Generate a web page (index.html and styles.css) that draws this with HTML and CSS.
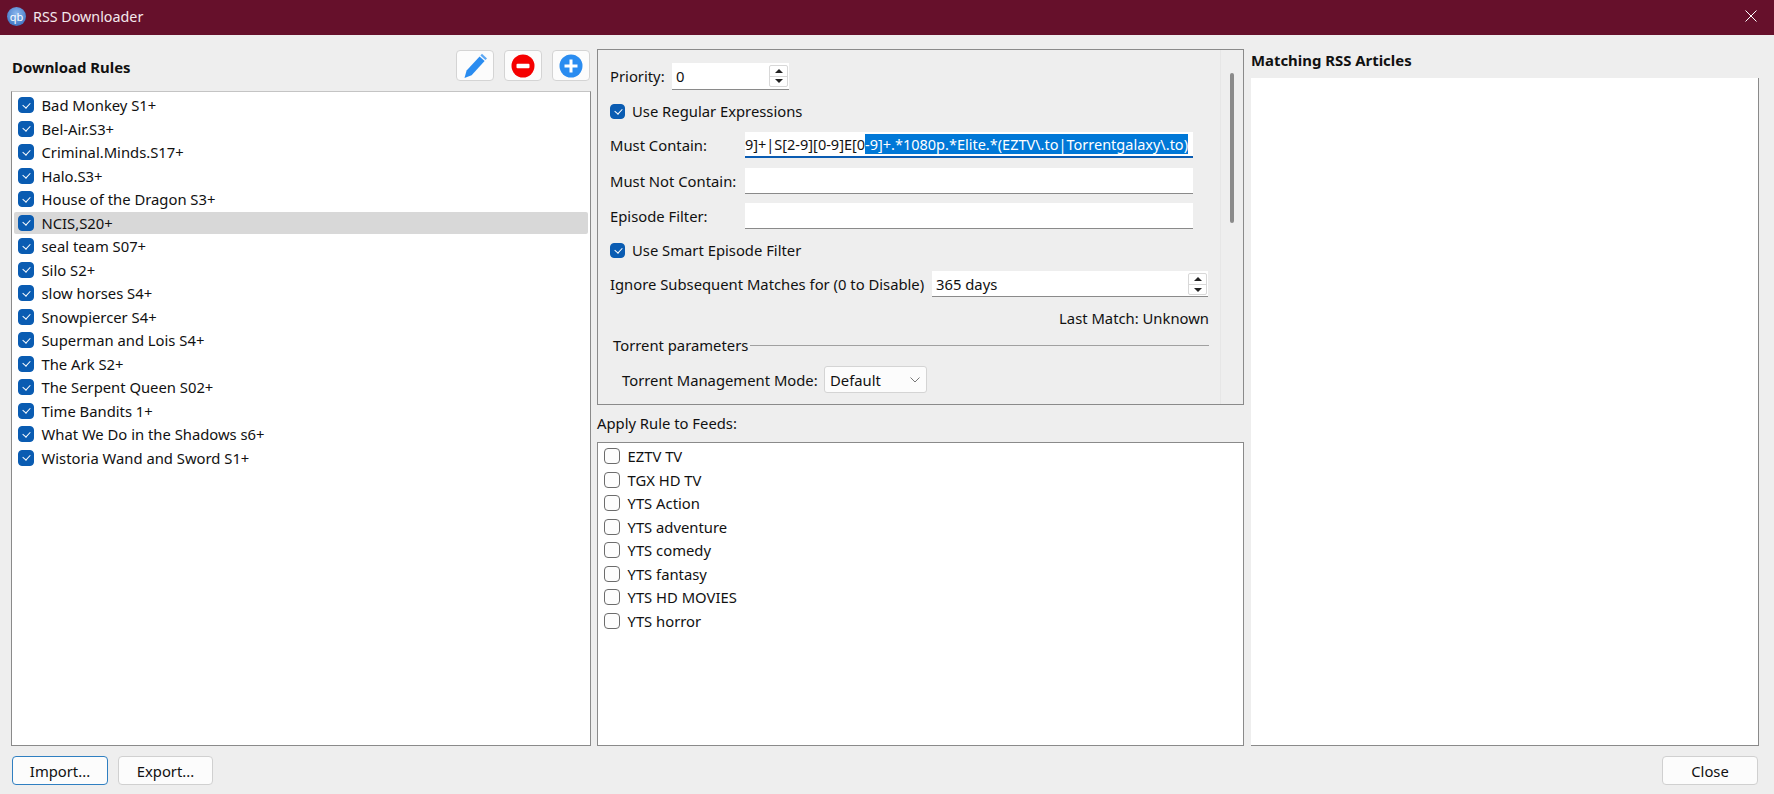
FILE: index.html
```html
<!DOCTYPE html>
<html lang="en">

<head>
 <meta charset="UTF-8">
 <meta name="viewport" content="width=device-width, initial-scale=1.0">
 <title>RSS Downloader</title>
 <link rel="stylesheet" href="styles.css">
</head>

<body>
 <header class="titlebar">
  <span class="app-icon">qb</span>
  <span class="app-title">RSS Downloader</span>
  <svg class="close-x" width="12" height="12" viewBox="0 0 12 12"><path d="M0.5 0.5 L11.5 11.5 M11.5 0.5 L0.5 11.5" stroke="#fff" stroke-width="1" fill="none"/></svg>
 </header>

 <main class="panes">
  <section class="rules">
   <div class="rules-head">
    <h2>Download Rules</h2>
    <div class="tools">
     <button class="tool">
      <svg width="24" height="26" viewBox="0 0 24 26"><path d="M1.5 25 L3.6 17.6 L16.6 3.4 L21.6 8 L8.6 22.2 Z" fill="#2a8cf0"/><path d="M17.4 2.5 L19 0.8 L24 5.4 L22.4 7.1 Z" fill="#2a8cf0" opacity=".75"/></svg>
     </button>
     <button class="tool">
      <svg width="24" height="24" viewBox="0 0 24 24"><circle cx="12" cy="12" r="11.5" fill="#f50000"/><rect x="5.5" y="9.8" width="13" height="4.4" rx="1" fill="#fff"/></svg>
     </button>
     <button class="tool">
      <svg width="24" height="24" viewBox="0 0 24 24"><circle cx="12" cy="12" r="11.5" fill="#2a8cf0"/><path d="M12 5.5 V18.5 M5.5 12 H18.5" stroke="#fff" stroke-width="3" fill="none"/></svg>
     </button>
    </div>
   </div>
   <ul class="list rule-list">
    <li><span class="check on"></span>Bad Monkey S1+</li>
    <li><span class="check on"></span>Bel-Air.S3+</li>
    <li><span class="check on"></span>Criminal.Minds.S17+</li>
    <li><span class="check on"></span>Halo.S3+</li>
    <li><span class="check on"></span>House of the Dragon S3+</li>
    <li class="selected"><span class="check on"></span>NCIS,S20+</li>
    <li><span class="check on"></span>seal team S07+</li>
    <li><span class="check on"></span>Silo S2+</li>
    <li><span class="check on"></span>slow horses S4+</li>
    <li><span class="check on"></span>Snowpiercer S4+</li>
    <li><span class="check on"></span>Superman and Lois S4+</li>
    <li><span class="check on"></span>The Ark S2+</li>
    <li><span class="check on"></span>The Serpent Queen S02+</li>
    <li><span class="check on"></span>Time Bandits 1+</li>
    <li><span class="check on"></span>What We Do in the Shadows s6+</li>
    <li><span class="check on"></span>Wistoria Wand and Sword S1+</li>
   </ul>
  </section>

  <section class="editor">
   <div class="settings">
    <div class="form">
     <div class="row">
      <label class="priority-label">Priority:</label>
      <div class="field spin priority">0<span class="arrows"><i class="up"></i><i class="down"></i></span></div>
     </div>
     <div class="row short push-1"><span class="check on"></span>Use Regular Expressions</div>
     <div class="row">
      <label class="field-label">Must Contain:</label>
      <div class="field wide focused"><span class="scrolled">9]+|S[2-9][0-9]E[0<span class="sel">-9]+.*1080p.*Elite.*(EZTV\.to|Torrentgalaxy\.to)</span></span></div>
     </div>
     <div class="row">
      <label class="field-label">Must Not Contain:</label>
      <div class="field wide"></div>
     </div>
     <div class="row pull-1">
      <label class="field-label">Episode Filter:</label>
      <div class="field wide"></div>
     </div>
     <div class="row short"><span class="check on"></span>Use Smart Episode Filter</div>
     <div class="row">
      <label class="ignore-label">Ignore Subsequent Matches for (0 to Disable)</label>
      <div class="field spin ignore">365 days<span class="arrows"><i class="up"></i><i class="down"></i></span></div>
     </div>
     <div class="row short last-match">Last Match: Unknown</div>
     <div class="row short group-title pull-5"><span>Torrent parameters</span><hr></div>
     <div class="row mode">
      <label class="mode-label">Torrent Management Mode:</label>
      <div class="combo">Default<svg width="10" height="6" viewBox="0 0 10 6"><path d="M0.5 0.5 L5 5 L9.5 0.5" stroke="#777" fill="none"/></svg></div>
     </div>
    </div>
    <div class="scroll-track"><div class="scroll-thumb"></div></div>
   </div>
   <div class="feeds-label">Apply Rule to Feeds:</div>
   <ul class="list feed-list">
    <li><span class="check"></span>EZTV TV</li>
    <li><span class="check"></span>TGX HD TV</li>
    <li><span class="check"></span>YTS Action</li>
    <li><span class="check"></span>YTS adventure</li>
    <li><span class="check"></span>YTS comedy</li>
    <li><span class="check"></span>YTS fantasy</li>
    <li><span class="check"></span>YTS HD MOVIES</li>
    <li><span class="check"></span>YTS horror</li>
   </ul>
  </section>

  <section class="matches">
   <h2>Matching RSS Articles</h2>
   <div class="list article-list"></div>
  </section>
 </main>

 <footer class="actions">
  <button class="btn default">Import...</button>
  <button class="btn">Export...</button>
  <button class="btn close">Close</button>
 </footer>
</body>

</html>
```
FILE: styles.css
```css
* {
 box-sizing: border-box;
}

html,
body {
 height: 100%;
}

body {
 margin: 0;
 display: flex;
 flex-direction: column;
 overflow: hidden;
 background-color: #eee;
 color: #111;
 font-family: "Noto Sans", sans-serif;
 font-size: 14.8px;
}

h2 {
 margin: 0;
 font-size: 14.9px;
 font-weight: 700;
}

ul {
 margin: 0;
 padding: 0;
 list-style: none;
}

/* title bar */
.titlebar {
 flex: none;
 height: 35px;
 display: flex;
 align-items: center;
 padding: 0 0 3px 7px;
 background-color: #66102b;
 color: #f4e8ec;
}

.app-icon {
 width: 19px;
 height: 19px;
 display: flex;
 align-items: center;
 justify-content: center;
 border-radius: 50%;
 background: radial-gradient(circle at 50% 35%, #8db8ee, #2a62b8);
 color: #fff;
 font-size: 11px;
 line-height: 1;
}

.app-title {
 margin-left: 7px;
 font-size: 14.3px;
}

.close-x {
 margin-left: auto;
 margin-right: 17px;
}

/* three panes */
.panes {
 flex: 1;
 min-height: 0;
 display: flex;
 gap: 6px;
 padding: 0 15px 0 11px;
}

.rules {
 width: 580px;
 display: flex;
 flex-direction: column;
}

.rules-head {
 height: 56px;
 display: flex;
 align-items: flex-start;
 justify-content: space-between;
 padding-top: 15px;
}

.rules-head h2 {
 margin: 7px 0 0 1px;
}

.tools {
 display: flex;
 gap: 10px;
 margin-right: 1px;
}

.tool {
 width: 38px;
 height: 31px;
 display: flex;
 align-items: center;
 justify-content: center;
 padding: 0;
 background-color: #fcfcfc;
 border: 1px solid #d4d4d4;
 border-radius: 4px;
}

.list {
 flex: 1;
 background-color: #fff;
 border: 1px solid #8a8a8a;
}

.rule-list {
 padding: 2px;
 border-top-color: #c4c4c4;
}

.list li {
 height: 22.5px;
 margin-bottom: 1px;
 display: flex;
 align-items: center;
 padding-left: 4px;
 border-radius: 2px;
}

.list li.selected {
 background-color: #d8d8d8;
}

.check {
 flex: none;
 width: 16px;
 height: 16px;
 margin-right: 7.5px;
 display: inline-block;
 position: relative;
 background-color: #fdfdfd;
 border: 1px solid #6c6c6c;
 border-radius: 4px;
}

.check.on {
 background-color: #0a5cb2;
 border-color: #0a5cb2;
}

.check.on::after {
 content: "";
 position: absolute;
 left: 4px;
 top: 3.5px;
 width: 6px;
 height: 4px;
 border-left: 1px solid #fff;
 border-bottom: 1px solid #fff;
 transform: rotate(-48deg);
}

.form .check {
 width: 15px;
 height: 15px;
 margin-right: 7px;
}

/* middle pane */
.editor {
 width: 647px;
 display: flex;
 flex-direction: column;
 padding-top: 14px;
}

.settings {
 height: 356px;
 display: flex;
 border: 1px solid #8a8a8a;
}

.form {
 flex: 1;
 display: flex;
 flex-direction: column;
 gap: 10px;
 padding: 13px 11px 0 12px;
}

.row {
 height: 26px;
 display: flex;
 align-items: center;
 flex: none;
}

.row.short {
 height: 22px;
}

.push-1 {
 margin-top: 1px;
}

.pull-1 {
 margin-top: -1px;
}

.pull-5 {
 margin-top: -5px;
}

.priority-label {
 width: 62px;
}

.field-label {
 width: 135px;
}

.ignore-label {
 width: 322px;
}

.field {
 height: 26px;
 display: flex;
 align-items: center;
 background-color: #fff;
 border-bottom: 1px solid #8a8a8a;
}

.wide {
 width: 448px;
 overflow: hidden;
}

.focused {
 border-bottom: 2px solid #0a5cb2;
}

.scrolled {
 white-space: nowrap;
 font-size: 14.5px;
}

.sel {
 display: inline-block;
 background-color: #0078d7;
 color: #fff;
}

.spin {
 position: relative;
 padding-left: 4px;
}

.priority {
 width: 117px;
 height: 27px;
}

.ignore {
 width: 276px;
}

.arrows {
 position: absolute;
 right: 1px;
 top: 2px;
 width: 19px;
 display: flex;
 flex-direction: column;
 border: 1px solid #d8d8d8;
 border-radius: 2px;
}

.arrows i {
 height: 10px;
 display: flex;
 align-items: center;
 justify-content: center;
}

.arrows i::after {
 content: "";
 border-left: 4px solid transparent;
 border-right: 4px solid transparent;
}

.arrows .up::after {
 border-bottom: 4px solid #222;
}

.arrows .down {
 border-top: 1px solid #d8d8d8;
}

.arrows .down::after {
 border-top: 4px solid #222;
}

.last-match {
 justify-content: flex-end;
}

.group-title {
 padding-left: 3px;
}

.group-title hr {
 flex: 1;
 margin: 0 0 0 2px;
 border: 0;
 border-top: 1px solid #a0a0a0;
}

.row.mode {
 height: 27px;
 padding-left: 12px;
}

.mode-label {
 width: 202px;
}

.combo {
 width: 103px;
 height: 27px;
 display: flex;
 align-items: center;
 justify-content: space-between;
 padding: 0 6px 0 5px;
 background-color: #fcfcfc;
 border: 1px solid #d4d4d4;
 border-radius: 3px;
}

.scroll-track {
 width: 23px;
 flex: none;
 padding: 23px 0 0 9px;
 border-left: 1px solid #e6e6e6;
}

.scroll-thumb {
 width: 4px;
 height: 150px;
 border-radius: 2px;
 background-color: #8a8a8a;
}

.feeds-label {
 height: 35px;
 margin-bottom: 2px;
 display: flex;
 align-items: center;
}

.feed-list {
 padding: 2px 0 0 2px;
}

/* right pane */
.matches {
 flex: 1;
 display: flex;
 flex-direction: column;
}

.matches h2 {
 height: 43px;
 padding: 14px 0 0 1px;
 line-height: 22px;
}

.article-list {
 border-width: 0 1px 1px 0;
 margin-left: 1px;
}

/* buttons at the bottom */
.actions {
 flex: none;
 height: 48px;
 display: flex;
 gap: 10px;
 padding: 10px 16px 0 12px;
}

.btn {
 width: 95px;
 height: 29px;
 padding: 0;
 background-color: #fcfcfc;
 border: 1px solid #d0d0d0;
 border-radius: 4px;
 color: #111;
 font-family: inherit;
 font-size: 14.8px;
}

.btn.default {
 width: 96px;
 border-color: #2f7fc1;
}

.btn.close {
 width: 96px;
 margin-left: auto;
}
```
